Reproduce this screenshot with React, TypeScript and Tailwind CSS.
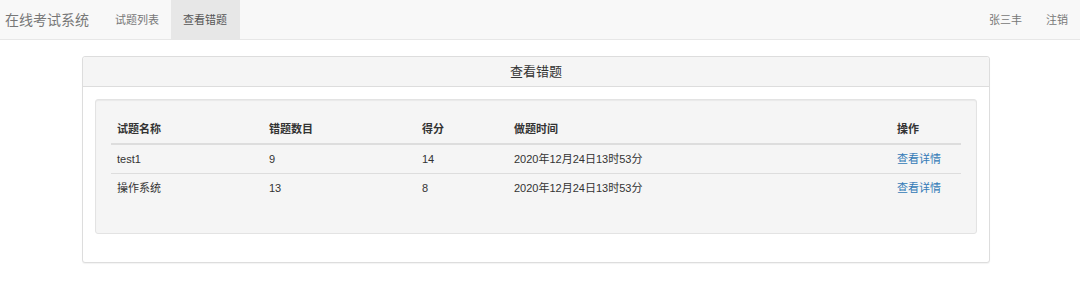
const rows = [
  { name: "test1", count: "9", score: "14", time: "2020年12月24日13时53分" },
  { name: "操作系统", count: "13", score: "8", time: "2020年12月24日13时53分" },
];

const App = () => {
  return (
    <div className="min-h-[281px] bg-white text-[11px] leading-[16px] text-[#333] font-['Liberation_Sans','Noto_Sans_CJK_SC',sans-serif]">
      <nav className="h-[40px] bg-[#f8f8f8] border-b border-[#e7e7e7] flex items-stretch">
        <div className="pl-[5px] pr-[14px] flex items-center text-[14px] text-[#777]">在线考试系统</div>
        <ul className="flex items-stretch">
          <li className="px-[12px] flex items-center text-[#777]">试题列表</li>
          <li className="pl-[12px] pr-[13px] flex items-center text-[#555] bg-[#e7e7e7]">查看错题</li>
        </ul>
        <ul className="ml-auto flex items-stretch">
          <li className="px-[12px] flex items-center text-[#777]">张三丰</li>
          <li className="px-[12px] flex items-center text-[#777]">注销</li>
        </ul>
      </nav>

      <div className="pt-[16px] flex justify-center">
        <div className="w-[908px] ml-[-8px] bg-white border border-[#ddd] rounded-[3px] shadow-[0_1px_1px_rgba(0,0,0,0.05)]">
          <div className="h-[30px] bg-[#f5f5f5] border-b border-[#ddd] rounded-t-[3px] flex items-center justify-center text-[13px] text-[#333]">
            查看错题
          </div>
          <div className="px-[12px] pt-[12px] pb-[28px]">
            <div className="bg-[#f5f5f5] border border-[#e3e3e3] rounded-[3px] px-[15px] pt-[15px] pb-[31px] shadow-[inset_0_1px_1px_rgba(0,0,0,0.05)]">
              <table className="w-full border-collapse text-left">
                <thead>
                  <tr className="border-b-2 border-[#ddd]">
                    <th className="w-[152px] px-[6px] py-[6px] font-bold">试题名称</th>
                    <th className="w-[153px] px-[6px] py-[6px] font-bold">错题数目</th>
                    <th className="w-[92px] px-[6px] py-[6px] font-bold">得分</th>
                    <th className="w-[383px] px-[6px] py-[6px] font-bold">做题时间</th>
                    <th className="px-[6px] py-[6px] font-bold">操作</th>
                  </tr>
                </thead>
                <tbody>
                  {rows.map((r, i) => (
                    <tr key={i} className={i === 0 ? "border-b border-[#ddd]" : ""}>
                      <td className="px-[6px] py-[6px]">{r.name}</td>
                      <td className="px-[6px] py-[6px]">{r.count}</td>
                      <td className="px-[6px] py-[6px]">{r.score}</td>
                      <td className="px-[6px] py-[6px]">{r.time}</td>
                      <td className="px-[6px] py-[6px] text-[#337ab7]">查看详情</td>
                    </tr>
                  ))}
                </tbody>
              </table>
            </div>
          </div>
        </div>
      </div>
    </div>
  );
};

export default App;
